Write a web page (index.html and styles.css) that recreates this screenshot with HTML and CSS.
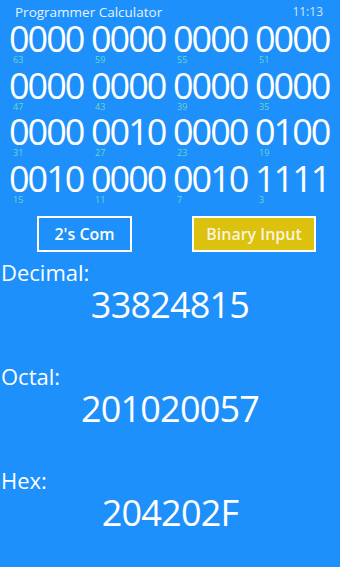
FILE: index.html
```html
<!DOCTYPE html>
<html>
<head>
<meta charset="utf-8">
<link rel="stylesheet" href="styles.css">
</head>
<body>
<div class="app">
  <header class="top">
    <span class="title">Programmer Calculator</span>
    <span class="time">11:13</span>
  </header>
  <div class="bits">
    <div class="cell"><span class="nib">0000</span><span class="pos">63</span></div>
    <div class="cell"><span class="nib">0000</span><span class="pos">59</span></div>
    <div class="cell"><span class="nib">0000</span><span class="pos">55</span></div>
    <div class="cell"><span class="nib">0000</span><span class="pos">51</span></div>
    <div class="cell"><span class="nib">0000</span><span class="pos">47</span></div>
    <div class="cell"><span class="nib">0000</span><span class="pos">43</span></div>
    <div class="cell"><span class="nib">0000</span><span class="pos">39</span></div>
    <div class="cell"><span class="nib">0000</span><span class="pos">35</span></div>
    <div class="cell"><span class="nib">0000</span><span class="pos">31</span></div>
    <div class="cell"><span class="nib">0010</span><span class="pos">27</span></div>
    <div class="cell"><span class="nib">0000</span><span class="pos">23</span></div>
    <div class="cell"><span class="nib">0100</span><span class="pos">19</span></div>
    <div class="cell"><span class="nib">0010</span><span class="pos">15</span></div>
    <div class="cell"><span class="nib">0000</span><span class="pos">11</span></div>
    <div class="cell"><span class="nib">0010</span><span class="pos">7</span></div>
    <div class="cell"><span class="nib">1111</span><span class="pos">3</span></div>
  </div>
  <div class="buttons">
    <button class="btn btn-com">2's Com</button>
    <button class="btn btn-bin">Binary Input</button>
  </div>
  <section class="result">
    <div class="label">Decimal:</div>
    <div class="value">33824815</div>
  </section>
  <section class="result">
    <div class="label">Octal:</div>
    <div class="value">201020057</div>
  </section>
  <section class="result">
    <div class="label">Hex:</div>
    <div class="value">204202F</div>
  </section>
</div>
</body>
</html>
```

FILE: styles.css
```css
html, body {
  margin: 0;
  padding: 0;
  background: #1e90fb;
}
body {
  font-family: "Open Sans", "Noto Sans", sans-serif;
  color: #ffffff;
  width: 340px;
  height: 567px;
  overflow: hidden;
}
.app {
  display: flex;
  flex-direction: column;
}
.top {
  display: flex;
  justify-content: space-between;
  align-items: center;
  height: 24px;
  padding: 0 17px 0 15px;
}
.title {
  font-size: 13.5px;
  color: #e6f3ff;
  line-height: 22px;
}
.time {
  font-size: 12px;
  color: #cfe6ff;
  line-height: 22px;
}
.bits {
  display: grid;
  grid-template-columns: repeat(4, 82px);
  grid-auto-rows: 46.5px;
  padding-left: 9px;
}
.cell {
  display: flex;
  flex-direction: column;
}
.nib {
  font-size: 36px;
  line-height: 30px;
  letter-spacing: -2px;
  color: #ffffff;
}
.pos {
  font-size: 9px;
  line-height: 12px;
  color: #6cd6c8;
  padding-left: 4px;
}
.buttons {
  display: flex;
  gap: 60px;
  padding-left: 37px;
  margin-top: 6px;
}
.btn {
  font-family: "Open Sans", "Noto Sans", sans-serif;
  font-weight: 600;
  font-size: 16px;
  color: #ffffff;
  height: 36px;
  border: 2px solid #ffffff;
  background: transparent;
  padding: 0;
  margin: 0;
}
.btn-com {
  width: 95px;
}
.btn-bin {
  width: 124px;
  background: #dcc10f;
  color: #f8f4dc;
}
.result {
  display: flex;
  flex-direction: column;
  height: 104px;
}
.result:first-of-type {
  margin-top: 7px;
}
.label {
  font-size: 22px;
  line-height: 26px;
  padding-left: 1px;
}
.value {
  font-size: 36px;
  line-height: 40px;
  text-align: center;
  letter-spacing: -0.8px;
}
```
